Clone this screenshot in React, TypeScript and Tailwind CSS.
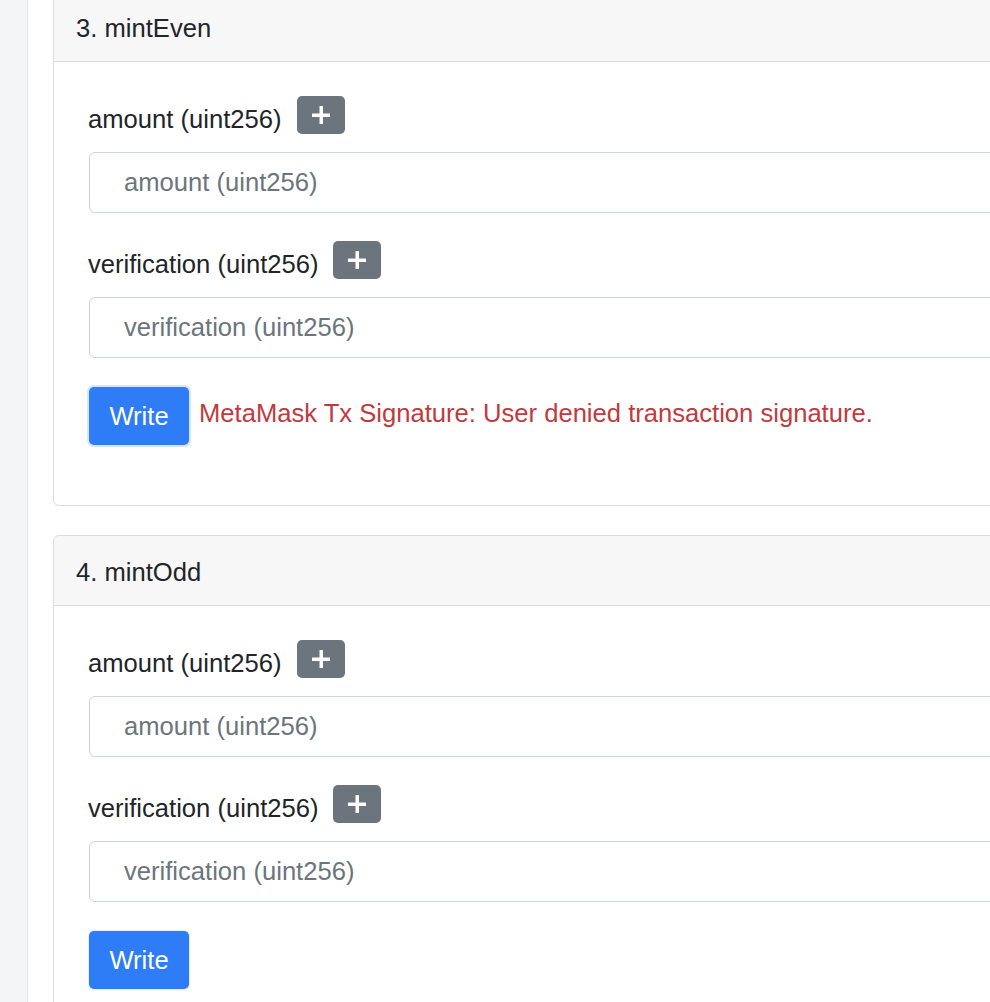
import React from "react";

function PlusBtn() {
  return (
    <span className="flex h-[38px] w-[48px] items-center justify-center rounded-[5px] bg-[#6c757d]">
      <svg width="20" height="20" viewBox="0 0 20 20">
        <rect x="8.5" y="1" width="3.5" height="18" rx="0.5" fill="#fff" />
        <rect x="1" y="8.5" width="18" height="3.5" rx="0.5" fill="#fff" />
      </svg>
    </span>
  );
}

function Field({ name }: { name: string }) {
  return (
    <div>
      <div className="-ml-[1px] flex h-[38px] items-center gap-[15px]">
        <span className="mt-[8px]">{name} (uint256)</span>
        <PlusBtn />
      </div>
      <input
        className="mt-[18px] block h-[61px] w-full rounded-[6px] border border-[#ced4da] bg-white pl-[34px] text-[25.6px] text-[#495057] outline-none placeholder:text-[#6c757d]"
        placeholder={`${name} (uint256)`}
      />
    </div>
  );
}

function Card({ title, error, ring }: { title: string; error?: string; ring?: boolean }) {
  return (
    <div className="w-[1100px] rounded-[6px] border border-[#dcdcdc] bg-white">
      <div className="flex h-[70px] items-center rounded-t-[6px] border-b border-[#dcdcdc] bg-[#f7f7f8] px-[22px] pt-[3px]">
        {title}
      </div>
      <div className="flex flex-col pl-[35px] pr-[35px] pt-[34px] pb-[60px]">
        <Field name="amount" />
        <div className="mt-[28px]">
          <Field name="verification" />
        </div>
        <div className="mt-[29px] flex items-center gap-[10px]">
          <button
            className={`h-[58px] w-[100px] rounded-[5px] bg-[#2f7df6] text-white ${ring ? "ring-2 ring-[#d6e6fd]" : "ring-1 ring-[#e3edfd]"}`}
          >
            Write
          </button>
          {error && <span className="mb-[6px] text-[#c13a40]">{error}</span>}
        </div>
      </div>
    </div>
  );
}

export default function App() {
  return (
    <div className="flex h-[1002px] w-[990px] overflow-hidden bg-white font-['Liberation_Sans',Arial,sans-serif] text-[25.6px] leading-[1.5] text-[#212529]">
      <div className="w-[28px] shrink-0 border-r border-[#e4e6ea] bg-[#f4f5f7]" />
      <div className="-mt-[9px] flex shrink-0 flex-col gap-[29px] pl-[25px]">
        <Card
          title="3. mintEven"
          error="MetaMask Tx Signature: User denied transaction signature."
          ring
        />
        <Card title="4. mintOdd" />
      </div>
    </div>
  );
}
